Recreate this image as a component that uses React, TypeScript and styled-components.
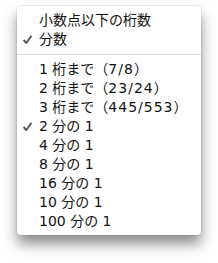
import React from "react";
import styled, { createGlobalStyle } from "styled-components";

const Global = createGlobalStyle`
  html, body { margin: 0; padding: 0; background: #ffffff; }
  body { width: 218px; height: 263px; overflow: hidden; }
`;

const Menu = styled.div`
  margin: 6px 0 0 17px;
  width: 184px;
  box-sizing: border-box;
  padding: 5px 0 4px;
  background: #ffffff;
  border-radius: 4px;
  box-shadow: 0 0 0 1px rgba(0, 0, 0, 0.06), 0 9px 14px rgba(0, 0, 0, 0.45);
  font-family: "DejaVu Sans", "Noto Sans CJK JP", sans-serif;
  font-size: 14px;
  color: #111;
`;

const Row = styled.div`
  position: relative;
  height: 19px;
  line-height: 19px;
  padding-left: 22px;
  white-space: nowrap;
`;

const Example = styled.span`
  letter-spacing: 1px;
`;

const Check = styled.svg`
  position: absolute;
  left: 6px;
  top: 5px;
  width: 9px;
  height: 9px;
`;

const Separator = styled.div`
  height: 1px;
  margin: 5px 0;
  background: #dedede;
`;

const CheckMark = () => (
  <Check viewBox="0 0 9 9">
    <path d="M0.6 5 L3.3 8 L8.5 0.8" fill="none" stroke="#555" strokeWidth="1.9" strokeLinejoin="round" />
  </Check>
);

type Item = { label: string; example?: string; checked: boolean };

const top: Item[] = [
  { label: "小数点以下の桁数", checked: false },
  { label: "分数", checked: true },
];

const items: Item[] = [
  { label: "1 桁まで", example: "7/8", checked: false },
  { label: "2 桁まで", example: "23/24", checked: false },
  { label: "3 桁まで", example: "445/553", checked: false },
  { label: "2 分の 1", checked: true },
  { label: "4 分の 1", checked: false },
  { label: "8 分の 1", checked: false },
  { label: "16 分の 1", checked: false },
  { label: "10 分の 1", checked: false },
  { label: "100 分の 1", checked: false },
];

const MenuRow = ({ item }: { item: Item }) => (
  <Row>
    {item.checked && <CheckMark />}
    {item.label}
    {item.example && (
      <>
        （<Example>{item.example}</Example>）
      </>
    )}
  </Row>
);

export default function App() {
  return (
    <>
      <Global />
      <Menu>
        {top.map((it) => (
          <MenuRow key={it.label} item={it} />
        ))}
        <Separator />
        {items.map((it) => (
          <MenuRow key={it.label} item={it} />
        ))}
      </Menu>
    </>
  );
}
